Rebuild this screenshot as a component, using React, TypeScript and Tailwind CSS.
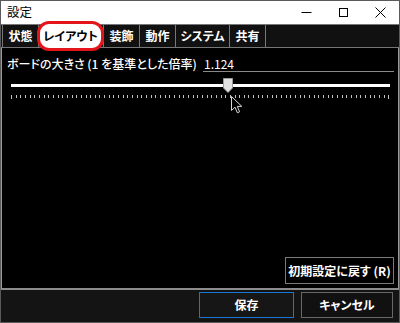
import React from 'react';

const tabs = [
  { label: '状態', w: 'w-[37px]' },
  { label: 'レイアウト', w: 'w-[65px]', active: true },
  { label: '装飾', w: 'w-[36px]' },
  { label: '動作', w: 'w-[36px]' },
  { label: 'システム', w: 'w-[54px]' },
  { label: '共有', w: 'w-[36px]' },
];

const ticks = Array.from({ length: 82 }, (_, i) => i);

function TitleButtons() {
  return (
    <div className="ml-auto flex h-full">
      <div className="w-[37px] flex items-center justify-center">
        <svg width="11" height="11" viewBox="0 0 11 11">
          <line x1="0.5" y1="5.5" x2="10.5" y2="5.5" stroke="#000" strokeWidth="1" />
        </svg>
      </div>
      <div className="w-[37px] flex items-center justify-center">
        <svg width="11" height="11" viewBox="0 0 11 11">
          <rect x="1.5" y="1.5" width="8" height="8" fill="none" stroke="#000" strokeWidth="1" />
        </svg>
      </div>
      <div className="w-[37px] flex items-center justify-center">
        <svg width="11" height="11" viewBox="0 0 11 11">
          <path d="M0.5 0.5 L10.5 10.5 M10.5 0.5 L0.5 10.5" stroke="#000" strokeWidth="1" />
        </svg>
      </div>
    </div>
  );
}

export default function App() {
  return (
    <div className="w-[400px] h-[323px] flex flex-col bg-white border border-[#5a5a5a] font-['Noto_Sans_CJK_JP','Noto_Sans',sans-serif] [font-feature-settings:'palt'] text-[12px] leading-none select-none overflow-hidden">
      {/* title bar */}
      <div className="h-[24px] flex items-center bg-white border-b border-[#777]">
        <span className="pl-[6px] text-black text-[12.5px]">設定</span>
        <TitleButtons />
      </div>

      {/* tab strip */}
      <div className="h-[22px] flex bg-[#111] pl-[1px] relative z-10">
        {tabs.map((t, i) => (
          <div
            key={t.label}
            className={`${t.w} relative flex items-center justify-center border-r border-[#777] text-white font-bold ${i === 0 ? 'border-l' : ''}`}
          >
            {t.active ? (
              <div className="absolute -left-[2px] -right-[1px] -top-[4px] -bottom-[4px] rounded-[12px] border-[3px] border-[#e3151a] bg-white flex items-center justify-center text-black">
                {t.label}
              </div>
            ) : (
              t.label
            )}
          </div>
        ))}
      </div>

      {/* content panel */}
      <div className="flex-1 flex flex-col bg-black border-t border-t-[#777] border-x border-x-[#9a9a9a] border-b-2 border-b-[#8c8c8c] text-white">
        <div className="flex pt-[8px]">
          <div className="w-[201px] pl-[5px] h-[16px] flex items-center font-medium">ボードの大きさ (1 を基準とした倍率)</div>
          <div className="flex-1 mr-[4px] h-[16px] flex items-center pl-[1px] border-b border-[#8a8a8a]">1.124</div>
        </div>

        <div className="relative ml-[9px] mr-[8px] mt-[12px]">
          <div className="h-[3px] bg-white" />
          <div className="flex justify-between items-start mt-[8px]">
            {ticks.map((i) => (
              <div
                key={i}
                className={`w-[1px] bg-[#c0c0c0] ${i === 0 || i === ticks.length - 1 ? 'h-[4px]' : 'h-[3px]'}`}
              />
            ))}
          </div>
          {/* thumb */}
          <svg className="absolute left-[212px] -top-[6px]" width="10" height="15" viewBox="0 0 10 15">
            <path d="M0.5 0.5 H9.5 V10 L5 14.5 L0.5 10 Z" fill="#e2e2e2" stroke="#9a9a9a" strokeWidth="1" />
          </svg>
          {/* cursor */}
          <svg className="absolute left-[220px] top-[12px]" width="12" height="18" viewBox="0 0 12 18">
            <path
              d="M0.5 0.5 L0.5 14.5 L4 11.2 L6.4 16.8 L8.6 15.8 L6.3 10.4 L10.8 10.4 Z"
              fill="#000"
              stroke="#d8d8d8"
              strokeWidth="1"
              strokeLinejoin="round"
            />
          </svg>
        </div>

        <button className="mt-auto self-end mr-[4px] mb-[4px] h-[27px] w-[109px] border border-[#7a7a7a] bg-black text-white font-bold flex items-center justify-center">
          初期設定に戻す (R)
        </button>
      </div>

      {/* bottom bar */}
      <div className="h-[32px] flex items-start justify-end gap-[7px] pt-[2px] pr-[6px] bg-[#141414]">
        <button className="h-[26px] w-[95px] border border-[#1a78d4] bg-[#161616] text-white font-bold flex items-center justify-center">
          保存
        </button>
        <button className="h-[26px] w-[92px] border border-[#686868] bg-[#111] text-white font-bold flex items-center justify-center">
          キャンセル
        </button>
      </div>
    </div>
  );
}
